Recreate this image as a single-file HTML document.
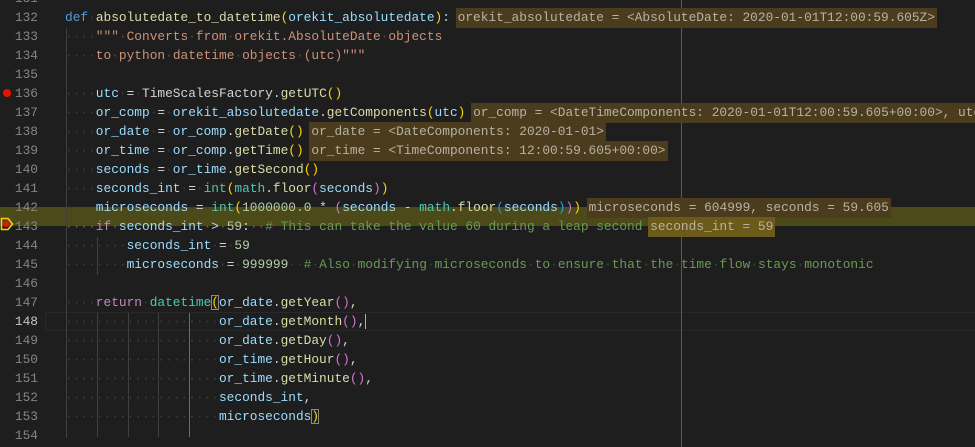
<!DOCTYPE html>
<html><head><meta charset="utf-8"><style>
body{margin:0;width:975px;height:447px;background:#1e1e1e;overflow:hidden;position:relative;font-family:"Liberation Mono",monospace;font-size:12.83px;}
.ln{position:absolute;left:0;width:38px;text-align:right;color:#858585;height:19px;line-height:19px}
.l{position:absolute;left:65px;white-space:pre;height:19px;line-height:19px;color:#d4d4d4}
i{font-style:normal;color:#3c3c3c}
.p{color:#9cdcfe}.f{color:#dcdcaa}.k{color:#569cd6}.c{color:#c586c0}.s{color:#ce9178}.s i{color:#5a4a40}.g{color:#6a9955}.g i{color:#3a4a35}.n{color:#b5cea8}.t{color:#4ec9b0}
.b1{color:#ffd700}.b2{color:#da70d6}.b3{color:#179fff}
.h{background:#4a3c1d;color:#b9b2a4;padding:2px 2px 3px;margin-left:-2px}
.g1{position:absolute;width:1px;background:#404040}
</style></head><body>
<div style="position:absolute;left:0;top:207px;width:975px;height:19px;background:#4b4a18"></div>
<div style="position:absolute;left:45px;top:312px;width:930px;height:17px;border:1px solid #282828"></div>
<div class="g1" style="left:66px;top:28px;height:410px"></div>
<div class="g1" style="left:97px;top:237px;height:38px"></div>
<div class="g1" style="left:97px;top:313px;height:124px"></div>
<div class="g1" style="left:128px;top:313px;height:124px"></div>
<div class="g1" style="left:158px;top:313px;height:124px"></div>
<div class="g1" style="left:189px;top:313px;height:124px;background:#6a6a6a"></div>
<div style="position:absolute;left:681px;top:0;width:1px;height:447px;background:#5a5a5a"></div>
<div style="position:absolute;left:3px;top:89px;width:8px;height:8px;border-radius:50%;background:#e51400"></div>
<svg style="position:absolute;left:0;top:217px" width="14" height="14" viewBox="0 0 14 14"><path d="M1.5 1.5H8L12.5 7L8 12.5H1.5Z" fill="none" stroke="#ffcc00" stroke-width="1.6"/><circle cx="6" cy="7" r="3" fill="#e51400"/></svg>

<div class="ln" style="top:-11px">131</div>
<div class="ln" style="top:8px">132</div><div class="l" style="top:8px"><span class="k">def</span><i>·</i><span class="f">absolutedate_to_datetime</span><span class="b1">(</span><span class="p">orekit_absolutedate</span><span class="b1">)</span>: <span class="h">orekit_absolutedate = &lt;AbsoluteDate: 2020-01-01T12:00:59.605Z&gt;</span></div>
<div class="ln" style="top:27px">133</div><div class="l" style="top:27px"><i>····</i><span class="s">"""<i>·</i>Converts<i>·</i>from<i>·</i>orekit.AbsoluteDate<i>·</i>objects</span></div>
<div class="ln" style="top:46px">134</div><div class="l" style="top:46px"><i>····</i><span class="s">to<i>·</i>python<i>·</i>datetime<i>·</i>objects<i>·</i>(utc)"""</span></div>
<div class="ln" style="top:65px">135</div>
<div class="ln" style="top:84px">136</div><div class="l" style="top:84px"><i>····</i><span class="p">utc</span><i>·</i>=<i>·</i>TimeScalesFactory.<span class="f">getUTC</span><span class="b1">()</span></div>
<div class="ln" style="top:103px">137</div><div class="l" style="top:103px"><i>····</i><span class="p">or_comp</span><i>·</i>=<i>·</i><span class="p">orekit_absolutedate</span>.<span class="f">getComponents</span><span class="b1">(</span><span class="p">utc</span><span class="b1">)</span> <span class="h">or_comp = &lt;DateTimeComponents: 2020-01-01T12:00:59.605+00:00&gt;, utc</span></div>
<div class="ln" style="top:122px">138</div><div class="l" style="top:122px"><i>····</i><span class="p">or_date</span><i>·</i>=<i>·</i><span class="p">or_comp</span>.<span class="f">getDate</span><span class="b1">()</span> <span class="h">or_date = &lt;DateComponents: 2020-01-01&gt;</span></div>
<div class="ln" style="top:141px">139</div><div class="l" style="top:141px"><i>····</i><span class="p">or_time</span><i>·</i>=<i>·</i><span class="p">or_comp</span>.<span class="f">getTime</span><span class="b1">()</span> <span class="h">or_time = &lt;TimeComponents: 12:00:59.605+00:00&gt;</span></div>
<div class="ln" style="top:160px">140</div><div class="l" style="top:160px"><i>····</i><span class="p">seconds</span><i>·</i>=<i>·</i><span class="p">or_time</span>.<span class="f">getSecond</span><span class="b1">()</span></div>
<div class="ln" style="top:179px">141</div><div class="l" style="top:179px"><i>····</i><span class="p">seconds_int</span><i>·</i>=<i>·</i><span class="t">int</span><span class="b1">(</span><span class="t">math</span>.<span class="f">floor</span><span class="b2">(</span><span class="p">seconds</span><span class="b2">)</span><span class="b1">)</span></div>
<div class="ln" style="top:198px">142</div><div class="l" style="top:198px"><i>····</i><span class="p">microseconds</span><i>·</i>=<i>·</i><span class="t">int</span><span class="b1">(</span><span class="n">1000000.0</span><i>·</i>*<i>·</i><span class="b2">(</span><span class="p">seconds</span><i>·</i>-<i>·</i><span class="t">math</span>.<span class="f">floor</span><span class="b3">(</span><span class="p">seconds</span><span class="b3">)</span><span class="b2">)</span><span class="b1">)</span> <span class="h">microseconds = 604999, seconds = 59.605</span></div>
<div class="ln" style="top:217px">143</div><div class="l" style="top:217px"><i style="color:#6a6a30">····</i><span class="c">if</span><i style="color:#6a6a30">·</i><span class="p">seconds_int</span><i style="color:#6a6a30">·</i>&gt;<i style="color:#6a6a30">·</i><span class="n">59</span>:<i style="color:#6a6a30">··</i><span class="g"># This can take the value 60 during a leap second</span> <span class="h" style="background:#6b5a1a">seconds_int = 59</span></div>
<div class="ln" style="top:236px">144</div><div class="l" style="top:236px"><i>········</i><span class="p">seconds_int</span><i>·</i>=<i>·</i><span class="n">59</span></div>
<div class="ln" style="top:255px">145</div><div class="l" style="top:255px"><i>········</i><span class="p">microseconds</span><i>·</i>=<i>·</i><span class="n">999999</span><i>··</i><span class="g">#<i>·</i>Also<i>·</i>modifying<i>·</i>microseconds<i>·</i>to<i>·</i>ensure<i>·</i>that<i>·</i>the<i>·</i>time<i>·</i>flow<i>·</i>stays<i>·</i>monotonic</span></div>
<div class="ln" style="top:274px">146</div>
<div class="ln" style="top:293px">147</div><div class="l" style="top:293px"><i>····</i><span class="c">return</span><i>·</i><span class="t">datetime</span><span class="b1" style="outline:1px solid #888;outline-offset:-1px">(</span><span class="p">or_date</span>.<span class="f">getYear</span><span class="b2">()</span>,</div>
<div class="ln" style="top:312px;color:#c6c6c6">148</div><div class="l" style="top:312px"><i>····················</i><span class="p">or_date</span>.<span class="f">getMonth</span><span class="b2">()</span>,<span style="border-left:1.5px solid #aeafad;margin-left:0"></span></div>
<div class="ln" style="top:331px">149</div><div class="l" style="top:331px"><i>····················</i><span class="p">or_date</span>.<span class="f">getDay</span><span class="b2">()</span>,</div>
<div class="ln" style="top:350px">150</div><div class="l" style="top:350px"><i>····················</i><span class="p">or_time</span>.<span class="f">getHour</span><span class="b2">()</span>,</div>
<div class="ln" style="top:369px">151</div><div class="l" style="top:369px"><i>····················</i><span class="p">or_time</span>.<span class="f">getMinute</span><span class="b2">()</span>,</div>
<div class="ln" style="top:388px">152</div><div class="l" style="top:388px"><i>····················</i><span class="p">seconds_int</span>,</div>
<div class="ln" style="top:407px">153</div><div class="l" style="top:407px"><i>····················</i><span class="p">microseconds</span><span class="b1" style="outline:1px solid #888;outline-offset:-1px">)</span></div>
<div class="ln" style="top:426px">154</div>
</body></html>
